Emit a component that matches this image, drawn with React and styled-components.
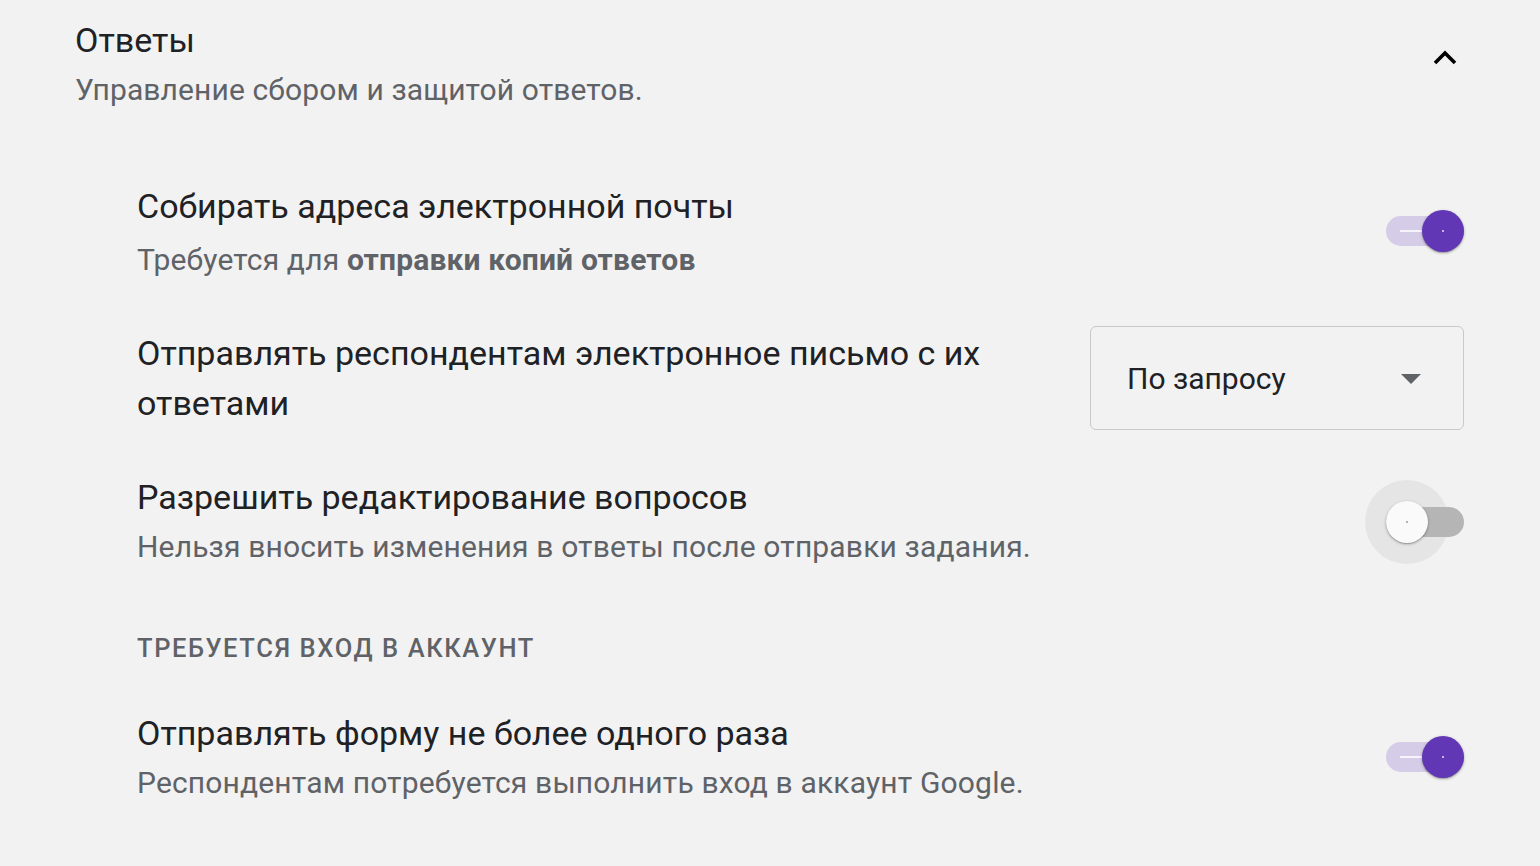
import React, { useState } from "react";
import styled, { createGlobalStyle } from "styled-components";

const GlobalStyle = createGlobalStyle`
  html, body {
    margin: 0;
    padding: 0;
    background: #f2f2f2;
  }
  body {
    font-family: Roboto, "Noto Sans", "Liberation Sans", sans-serif;
    color: #202124;
  }
`;

const Page = styled.div`
  display: flex;
  flex-direction: column;
  padding: 15px 76px 40px 75px;
`;

const Header = styled.header`
  display: flex;
  justify-content: space-between;
  align-items: flex-start;
`;

const HeaderText = styled.div`
  display: flex;
  flex-direction: column;
`;

const Title = styled.h2`
  margin: 0;
  font-size: 34px;
  font-weight: 400;
  line-height: 50px;
  color: #202124;
`;

const Subtitle = styled.p`
  margin: 0;
  font-size: 30px;
  line-height: 50px;
  letter-spacing: 0.12px;
  color: #5f6368;
`;

const CollapseButton = styled.button`
  margin: 34px 7px 0 0;
  padding: 0;
  border: none;
  background: none;
  display: flex;
  cursor: pointer;
`;

const Settings = styled.div`
  display: flex;
  flex-direction: column;
  padding-left: 62px;
  margin-top: 66px;
`;

const Row = styled.div`
  display: flex;
  align-items: center;
  justify-content: space-between;
  gap: 90px;
  margin-bottom: ${(p) => p.$gap || 0}px;
`;

const RowText = styled.div`
  flex: 1;
  display: flex;
  flex-direction: column;
`;

const RowTitle = styled.div`
  font-size: 34px;
  line-height: 50px;
  color: #202124;
`;

const RowHint = styled.div`
  font-size: 30px;
  line-height: 50px;
  letter-spacing: 0.16px;
  margin-top: ${(p) => p.$shift || 0}px;
  color: #5f6368;

  b {
    font-weight: 700;
  }
`;

const SectionLabel = styled.div`
  font-size: 25.5px;
  line-height: 32px;
  font-weight: 500;
  letter-spacing: 1.6px;
  color: #5f6368;
  margin: 60px 0 44px;
`;

const Switch = styled.button`
  position: relative;
  isolation: isolate;
  flex: none;
  width: 78px;
  height: 30px;
  padding: 0;
  margin-bottom: ${(p) => p.$lift || 0}px;
  border: none;
  background: none;
  cursor: pointer;
`;

const Track = styled.span`
  position: absolute;
  inset: 0;
  z-index: 1;
  border-radius: 15px;
  background: ${(p) => (p.$on ? "#d5cce8" : "#b5b5b5")};

  &::after {
    content: "";
    position: absolute;
    left: 14px;
    top: 14px;
    width: 22px;
    height: 2px;
    background: rgba(255, 255, 255, 0.8);
    display: ${(p) => (p.$on ? "block" : "none")};
  }
`;

const Halo = styled.span`
  position: absolute;
  z-index: 0;
  left: -21px;
  top: -27px;
  width: 84px;
  height: 84px;
  border-radius: 50%;
  background: #e5e5e5;
`;

const Thumb = styled.span`
  position: absolute;
  z-index: 2;
  top: -6px;
  left: ${(p) => (p.$on ? "36px" : "0")};
  width: 42px;
  height: 42px;
  border-radius: 50%;
  background: ${(p) => (p.$on ? "#6237b5" : "#fafafa")};
  box-shadow: 0 1px 3px rgba(0, 0, 0, 0.3), 0 1px 1px rgba(0, 0, 0, 0.14);

  &::after {
    content: "";
    position: absolute;
    left: 20px;
    top: 20px;
    width: 2px;
    height: 2px;
    border-radius: 50%;
    background: ${(p) => (p.$on ? "#e8e0f5" : "#9a9a9a")};
  }
`;

const Select = styled.div`
  flex: none;
  box-sizing: border-box;
  width: 374px;
  height: 104px;
  display: flex;
  align-items: center;
  justify-content: space-between;
  padding: 0 42px 0 36px;
  border: 1.5px solid #c9c9c9;
  border-radius: 6px;
  font-size: 30px;
  color: #202124;
  cursor: pointer;
`;

const Caret = styled.span`
  width: 0;
  height: 0;
  border-left: 10.5px solid transparent;
  border-right: 10.5px solid transparent;
  border-top: 10.5px solid #5f6368;
  margin-top: 2px;
`;

function Toggle({ initial, focus, lift }) {
  const [on, setOn] = useState(initial);
  return (
    <Switch role="switch" aria-checked={on} $lift={lift} onClick={() => setOn(!on)}>
      {focus && <Halo />}
      <Track $on={on} />
      <Thumb $on={on} />
    </Switch>
  );
}

export default function App() {
  return (
    <>
      <GlobalStyle />
      <Page>
        <Header>
          <HeaderText>
            <Title>Ответы</Title>
            <Subtitle>Управление сбором и защитой ответов.</Subtitle>
          </HeaderText>
          <CollapseButton aria-label="Свернуть">
            <svg width="24" height="16" viewBox="0 0 24 16">
              <polyline points="2,14 12,4 22,14" fill="none" stroke="#000" strokeWidth="3.6" />
            </svg>
          </CollapseButton>
        </Header>

        <Settings>
          <Row $gap={41}>
            <RowText>
              <RowTitle>Собирать адреса электронной почты</RowTitle>
              <RowHint $shift={4}>
                Требуется для <b>отправки копий ответов</b>
              </RowHint>
            </RowText>
            <Toggle initial={true} lift={5} />
          </Row>

          <Row $gap={42}>
            <RowText>
              <RowTitle>Отправлять респондентам электронное письмо с их ответами</RowTitle>
            </RowText>
            <Select>
              По запросу
              <Caret />
            </Select>
          </Row>

          <Row>
            <RowText>
              <RowTitle>Разрешить редактирование вопросов</RowTitle>
              <RowHint>Нельзя вносить изменения в ответы после отправки задания.</RowHint>
            </RowText>
            <Toggle initial={false} focus />
          </Row>

          <SectionLabel>ТРЕБУЕТСЯ ВХОД В АККАУНТ</SectionLabel>

          <Row>
            <RowText>
              <RowTitle>Отправлять форму не более одного раза</RowTitle>
              <RowHint>Респондентам потребуется выполнить вход в аккаунт Google.</RowHint>
            </RowText>
            <Toggle initial={true} lift={2} />
          </Row>
        </Settings>
      </Page>
    </>
  );
}
